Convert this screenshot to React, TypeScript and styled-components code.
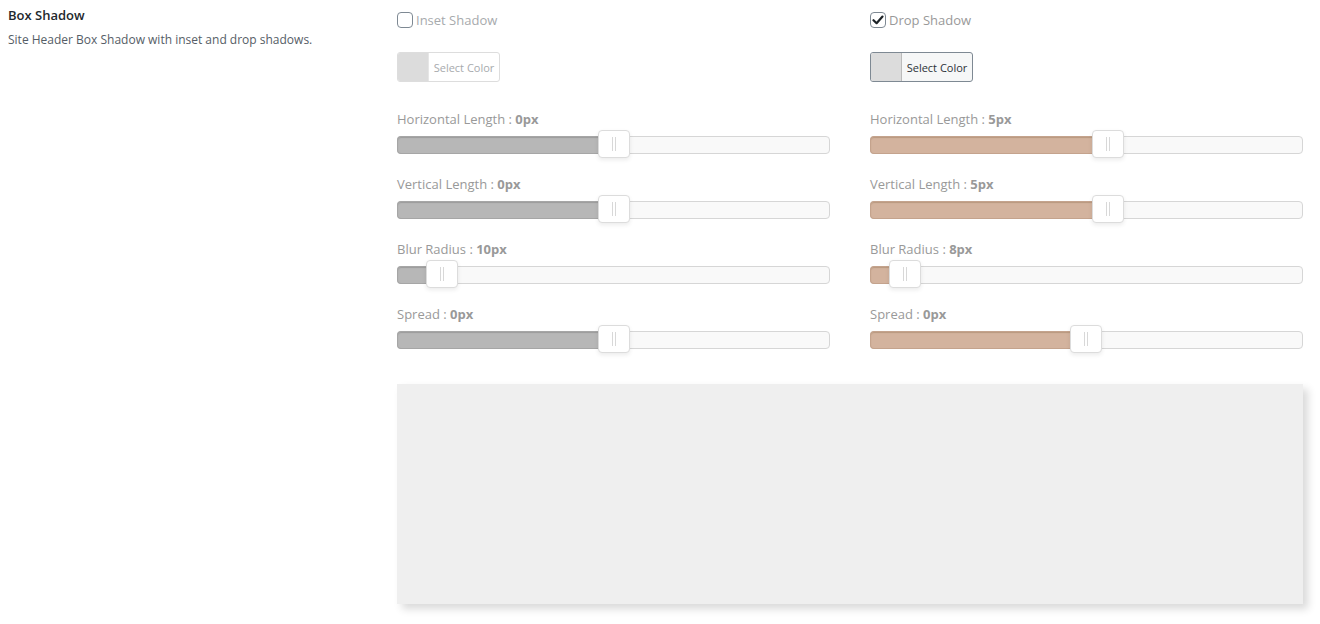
import React from "react";
import styled, { createGlobalStyle } from "styled-components";

const Global = createGlobalStyle`
  html, body { margin: 0; padding: 0; background: #fff; }
  body { font-family: "Open Sans", "Noto Sans", sans-serif; }
`;

const Page = styled.div`
  display: grid;
  grid-template-columns: 389px 906px;
  padding: 0 0 0 8px;
  width: 1320px;
  height: 624px;
  box-sizing: border-box;
`;

const Info = styled.div`
  padding-top: 6px;
`;

const Title = styled.div`
  font-size: 13px;
  font-weight: 600;
  color: #23282d;
  line-height: 18px;
`;

const Desc = styled.div`
  margin-top: 8px;
  font-size: 12px;
  color: #555d66;
  line-height: 16px;
`;

const Controls = styled.div`
  display: flex;
  flex-direction: column;
  padding-top: 12px;
`;

const Columns = styled.div`
  display: grid;
  grid-template-columns: 433px 433px;
  column-gap: 40px;
`;

const Column = styled.div`
  display: flex;
  flex-direction: column;
`;

const CheckRow = styled.label<{ $disabled?: boolean }>`
  display: flex;
  align-items: center;
  gap: 3px;
  height: 16px;
  font-size: 13px;
  color: ${(p) => (p.$disabled ? "#a7aaad" : "#999")};
`;

const Box = styled.span`
  width: 14px;
  height: 14px;
  border: 1px solid #7e8993;
  border-radius: 4px;
  background: #fff;
  display: flex;
  align-items: center;
  justify-content: center;
`;

const ColorButton = styled.div<{ $disabled?: boolean }>`
  margin-top: 24px;
  display: flex;
  width: 103px;
  height: 30px;
  box-sizing: border-box;
  border: 1px solid ${(p) => (p.$disabled ? "#ddd" : "#7e8993")};
  border-radius: 3px;
  overflow: hidden;
  background: ${(p) => (p.$disabled ? "#fff" : "#f6f7f7")};
`;

const Swatch = styled.span<{ $disabled?: boolean }>`
  width: 30px;
  background: #dcdcdc;
  border-right: 1px solid ${(p) => (p.$disabled ? "#e6e6e6" : "#bbb")};
`;

const ColorText = styled.span<{ $disabled?: boolean }>`
  flex: 1;
  display: flex;
  align-items: center;
  justify-content: center;
  font-size: 11px;
  color: ${(p) => (p.$disabled ? "#a7aaad" : "#2c3338")};
`;

const SliderList = styled.div`
  display: flex;
  flex-direction: column;
  gap: 21px;
  margin-top: 28px;
`;

const SliderLabel = styled.div`
  font-size: 13px;
  line-height: 18px;
  color: #999;
  b { font-weight: 700; }
`;

const Track = styled.div`
  position: relative;
  margin-top: 8px;
  height: 18px;
  box-sizing: border-box;
  border: 1px solid #d6d6d6;
  border-radius: 4px;
  background: #f9f9f9;
`;

const Fill = styled.div<{ $tone: "gray" | "tan" }>`
  position: absolute;
  left: -1px;
  top: -1px;
  bottom: -1px;
  border-radius: 4px 0 0 4px;
  background: ${(p) => (p.$tone === "gray" ? "#b7b7b7" : "#d3b39e")};
  border: 1px solid ${(p) => (p.$tone === "gray" ? "#a6a6a6" : "#c4a38d")};
  border-right: none;
  box-shadow: inset 0 1px 1px ${(p) => (p.$tone === "gray" ? "#9c9c9c" : "#b8987f")};
  box-sizing: border-box;
`;

const Handle = styled.div`
  position: absolute;
  top: -7px;
  width: 32px;
  height: 28px;
  box-sizing: border-box;
  border: 1px solid #dcdcdc;
  border-radius: 4px;
  background: #fff;
  box-shadow: 0 2px 4px rgba(0, 0, 0, 0.08);
  display: flex;
  align-items: center;
  justify-content: center;
  gap: 2px;
  &::before, &::after {
    content: "";
    width: 1px;
    height: 14px;
    background: #d8d8d8;
  }
`;

const Preview = styled.div`
  margin-top: 35px;
  height: 220px;
  background: #efefef;
  box-shadow: 5px 5px 8px 0 rgba(0, 0, 0, 0.15);
`;

type SliderProps = { label: string; value: string; pos: number; tone: "gray" | "tan" };

function Slider({ label, value, pos, tone }: SliderProps) {
  return (
    <div>
      <SliderLabel>
        {label} : <b>{value}</b>
      </SliderLabel>
      <Track>
        <Fill $tone={tone} style={{ width: pos + 1 }} />
        <Handle style={{ left: pos - 16 }} />
      </Track>
    </div>
  );
}

const Check = () => (
  <svg width="12" height="12" viewBox="0 0 12 12">
    <path d="M1.5 6.2 L4.6 9.2 L10.5 2.6" fill="none" stroke="#1d2327" strokeWidth="2.2" strokeLinecap="round" strokeLinejoin="round" />
  </svg>
);

export default function App() {
  const left = [
    { label: "Horizontal Length", value: "0px", pos: 216 },
    { label: "Vertical Length", value: "0px", pos: 216 },
    { label: "Blur Radius", value: "10px", pos: 44 },
    { label: "Spread", value: "0px", pos: 216 },
  ];
  const right = [
    { label: "Horizontal Length", value: "5px", pos: 237 },
    { label: "Vertical Length", value: "5px", pos: 237 },
    { label: "Blur Radius", value: "8px", pos: 34 },
    { label: "Spread", value: "0px", pos: 215 },
  ];
  return (
    <>
      <Global />
      <Page>
        <Info>
          <Title>Box Shadow</Title>
          <Desc>Site Header Box Shadow with inset and drop shadows.</Desc>
        </Info>
        <Controls>
          <Columns>
            <Column>
              <CheckRow $disabled>
                <Box />
                Inset Shadow
              </CheckRow>
              <ColorButton $disabled>
                <Swatch $disabled />
                <ColorText $disabled>Select Color</ColorText>
              </ColorButton>
              <SliderList>
                {left.map((s) => (
                  <Slider key={s.label} {...s} tone="gray" />
                ))}
              </SliderList>
            </Column>
            <Column>
              <CheckRow>
                <Box>
                  <Check />
                </Box>
                Drop Shadow
              </CheckRow>
              <ColorButton>
                <Swatch />
                <ColorText>Select Color</ColorText>
              </ColorButton>
              <SliderList>
                {right.map((s) => (
                  <Slider key={s.label} {...s} tone="tan" />
                ))}
              </SliderList>
            </Column>
          </Columns>
          <Preview />
        </Controls>
      </Page>
    </>
  );
}
